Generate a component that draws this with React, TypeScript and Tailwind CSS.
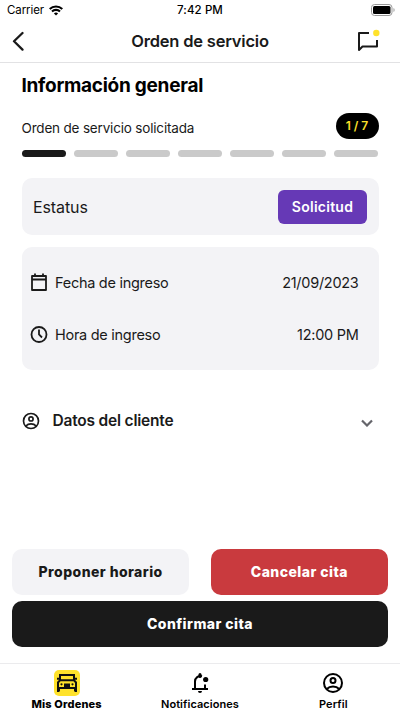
import React from "react";

const steps = [1, 2, 3, 4, 5, 6, 7];

function UserIcon({ className }: { className: string }) {
  return (
    <svg viewBox="0 0 24 24" className={className} fill="none" stroke="currentColor" strokeWidth="2">
      <circle cx="12" cy="12" r="9" />
      <circle cx="12" cy="9.5" r="2.5" />
      <path d="M5.8 18c1.6-1.7 3.8-2.5 6.2-2.5s4.6.8 6.2 2.5" />
    </svg>
  );
}

function BellIcon() {
  return (
    <svg viewBox="0 0 24 24" className="size-6" fill="none" stroke="currentColor" strokeWidth="2">
      <path d="M4 18h16M7 18v-7.5a5.5 5.5 0 0 1 7-5.3M17 13.5V18" />
      <path d="M12 5.5v-2" strokeWidth="3" strokeLinecap="round" />
      <circle cx="17.7" cy="8.5" r="2.6" fill="currentColor" stroke="none" />
      <path d="M10 20h4a2 2 0 0 1-4 0z" fill="currentColor" stroke="none" />
    </svg>
  );
}

function CarIcon() {
  return (
    <svg viewBox="0 0 26 26" className="size-[26px] rounded-[5px] bg-[#ffe22b]" fill="none" stroke="#111" strokeWidth="2">
      <path d="M6 10.5V5h14v5.5" />
      <path d="M4 22v-9.5l2-2.2h14l2 2.2V22M4 18h18" />
      <path d="M3 8.8h2.5M20.5 8.8H23M5 18.5v3M21 18.5v3" />
      <path d="M10 13.5h6V18h-6z" fill="#111" stroke="none" />
      <circle cx="7.5" cy="14.3" r="1.1" fill="#111" stroke="none" />
      <circle cx="18.5" cy="14.3" r="1.1" fill="#111" stroke="none" />
    </svg>
  );
}

export default function App() {
  return (
    <div className="flex h-[711px] w-[400px] flex-col overflow-hidden bg-white font-['Inter',sans-serif] text-[#1a1a1a]">
      {/* Status bar */}
      <div className="grid h-5 grid-cols-3 items-center pr-[5px] pl-[7px] text-[11.5px] text-black">
        <div className="flex items-center gap-[5px]">
          <span className="pt-[2px] tracking-[-0.1px]">Carrier</span>
          <svg viewBox="0 0 14 11" className="h-[11px] w-[14px]" fill="none" stroke="black" strokeWidth="2.1">
            <path d="M.7 4a9 9 0 0 1 12.6 0M3 6.5a5.7 5.7 0 0 1 8 0" />
            <path d="M7 10.6 4.9 8.5a3 3 0 0 1 4.2 0z" fill="black" stroke="none" />
          </svg>
        </div>
        <span className="pt-[2px] pr-[2px] text-center font-medium tracking-[0.1px]">7:42 PM</span>
        <svg viewBox="0 0 24 12" className="h-3 w-6 justify-self-end">
          <rect x=".5" y=".5" width="20.5" height="11" rx="3" fill="white" stroke="#999" />
          <rect x="2" y="2" width="17.5" height="8" rx="1.5" />
          <path d="M22.5 4v4c1.5-.7 1.5-3.3 0-4z" fill="#999" />
        </svg>
      </div>

      {/* Header */}
      <header className="flex h-[43px] items-center justify-between border-b border-[#e2e2e4] pr-5 pl-[11px]">
        <button aria-label="Volver" className="w-[33px]">
          <svg viewBox="0 0 14 20" className="h-5 w-[14px]" fill="none" stroke="currentColor" strokeWidth="2.3">
            <path d="M11.5 2 3 10.3l8.5 8.300" strokeLinecap="round" strokeLinejoin="round" />
          </svg>
        </button>
        <h1 className="text-[16.5px] font-semibold tracking-[-0.2px]">Orden de servicio</h1>
        <svg viewBox="0 0 24 24" className="size-6" fill="none" stroke="currentColor" strokeWidth="2">
          <path d="M13 4H3v17l3.5-3.500H21V11" strokeLinejoin="round" />
          <circle cx="20.3" cy="4" r="3.2" fill="#ffe22b" stroke="none" />
        </svg>
      </header>

      <main className="flex flex-1 flex-col px-[21.5px]">
        <h2 className="mt-[11px] h-6 text-[19px] leading-6 font-bold tracking-[-0.27px] text-black">Información general</h2>
        <div className="mt-[15px] flex h-[26px] items-center justify-between">
          <span className="pt-1 text-[13.5px] tracking-[-0.18px]">Orden de servicio solicitada</span>
          <span className="flex h-[26px] w-[43px] items-center justify-center rounded-full bg-black text-[12px] font-semibold text-[#ffe22b]">1 / 7</span>
        </div>
        <div className="mt-[11px] grid grid-cols-7 gap-2">
          {steps.map((step) => (
            <div key={step} className={step === 1 ? "h-[7px] rounded-full bg-[#1a1a1a]" : "h-[7px] rounded-full bg-[#cacaca]"} />
          ))}
        </div>

        <section className="mt-[21px] flex h-[57px] items-center justify-between rounded-[10px] bg-[#f3f3f6] pr-[11.5px] pl-[11.5px]">
          <span className="text-[16px] tracking-[-0.1px]">Estatus</span>
          <span className="flex h-[34px] w-[89px] items-center justify-center rounded-[6px] bg-[#6639b6] text-[14px] font-semibold tracking-[0.25px] text-white">Solicitud</span>
        </section>

        <section className="mt-3 flex h-[123px] flex-col gap-7 rounded-[10px] bg-[#f3f3f6] pt-[23px] pr-5 pl-2 text-[14.5px] tracking-[-0.28px]">
          <div className="flex h-6 items-center">
            <svg viewBox="0 0 18 18" className="mr-[7.5px] size-[18px]" fill="none" stroke="currentColor" strokeWidth="1.8">
              <path d="M2 3h14v14H2zM2 6.500h14M5 .5V3M13 .5V3" strokeLinejoin="round" />
            </svg>
            <span className="flex-1 pt-px">Fecha de ingreso</span>
            <span className="pt-px">21/09/2023</span>
          </div>
          <div className="flex h-6 items-center">
            <svg viewBox="0 0 18 18" className="mr-[7.5px] size-[18px]" fill="none" stroke="currentColor" strokeWidth="1.8">
              <circle cx="9" cy="9.5" r="7.5" />
              <path d="M9 4.500v5l3 3" />
            </svg>
            <span className="flex-1 pt-px">Hora de ingreso</span>
            <span className="pt-px">12:00 PM</span>
          </div>
        </section>

        <div className="mt-[39px] flex h-6 items-center">
          <UserIcon className="mr-[11.5px] -ml-[0.5px] size-5" />
          <span className="flex-1 text-[15.5px] font-semibold tracking-[-0.2px]">Datos del cliente</span>
          <svg viewBox="0 0 12 8" className="mt-1 mr-[5.5px] h-2 w-3 text-[#65656b]" fill="none" stroke="currentColor" strokeWidth="2.2">
            <path d="m1 1.500 5 5 5-5" />
          </svg>
        </div>
      </main>

      {/* Actions */}
      <div className="mb-4 grid grid-cols-2 gap-x-[21.5px] gap-y-[6px] px-3 text-[14px] font-extrabold tracking-[0.44px]">
        <button className="h-[46px] rounded-[10px] bg-[#f3f3f6] pb-[2px]">Proponer horario</button>
        <button className="h-[46px] rounded-[10px] bg-[#c93a3e] pb-[2px] text-white">Cancelar cita</button>
        <button className="col-span-2 h-[46px] rounded-[10px] bg-[#1a1a1a] pb-[2px] text-white">Confirmar cita</button>
      </div>

      {/* Tabs */}
      <nav className="grid h-12 grid-cols-3 border-t border-[#ebebed] pt-[6px] text-[11px] font-semibold text-black">
        <div className="flex flex-col items-center gap-px font-extrabold">
          <CarIcon />
          <span className="leading-[15px] tracking-[0.15px]">Mis Ordenes</span>
        </div>
        <div className="flex flex-col items-center gap-[2px] pt-px">
          <BellIcon />
          <span className="leading-[15px] tracking-[0.06px]">Notificaciones</span>
        </div>
        <div className="flex flex-col items-center gap-[2px] pt-px">
          <UserIcon className="size-6" />
          <span className="leading-[15px] tracking-[0.1px]">Perfil</span>
        </div>
      </nav>
    </div>
  );
}
